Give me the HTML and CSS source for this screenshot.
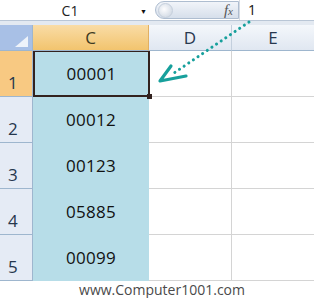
FILE: index.html
```html
<!DOCTYPE html>
<html lang="en">
<head>
    <meta charset="UTF-8">
    <title>Leading zeros</title>
    <link rel="stylesheet" href="styles.css">
</head>
<body>
    <div class="page">
        <div class="formula-bar">
            <div class="name-box">
                <span class="name">C1</span>
                <span class="drop">&#9660;</span>
            </div>
            <div class="fx-pill">
                <span class="knob"></span>
                <span class="fx">f<small>x</small></span>
            </div>
            <div class="formula">1</div>
        </div>
        <div class="strip"></div>

        <div class="sheet">
            <div class="corner"><span class="tri"></span></div>
            <div class="col-head active">C</div>
            <div class="col-head">D</div>
            <div class="col-head last">E</div>

            <div class="row-head active">1</div>
            <div class="cell val selected">00001</div>
            <div class="cell"></div>
            <div class="cell last"></div>

            <div class="row-head">2</div>
            <div class="cell val">00012</div>
            <div class="cell"></div>
            <div class="cell last"></div>

            <div class="row-head">3</div>
            <div class="cell val">00123</div>
            <div class="cell"></div>
            <div class="cell last"></div>

            <div class="row-head">4</div>
            <div class="cell val">05885</div>
            <div class="cell"></div>
            <div class="cell last"></div>

            <div class="row-head">5</div>
            <div class="cell val">00099</div>
            <div class="cell"></div>
            <div class="cell last"></div>
        </div>

        <div class="footer">www.Computer1001.com</div>

        <!-- callout arrow from formula bar to the cell -->
        <svg class="arrow" viewBox="0 0 314 298" xmlns="http://www.w3.org/2000/svg">
            <path d="M249 22 L174 73" stroke="#17a09c" stroke-width="3" stroke-dasharray="0.1 5.5" stroke-linecap="round" fill="none"/>
            <path d="M171 66 L160 81 L186 76" stroke="#17a09c" stroke-width="3.2" stroke-linecap="round" stroke-linejoin="round" fill="none"/>
        </svg>
    </div>
</body>
</html>
```

FILE: styles.css
```css
body {
    margin: 0;
    background: #fff;
    font-family: 'Open Sans', 'Noto Sans', sans-serif;
}
.page {
    position: relative;
    width: 314px;
    height: 298px;
    overflow: hidden;
}
.formula-bar {
    display: flex;
    height: 20px;
    border-bottom: 1px solid #b9c6d6;
    background: #fff;
}
.name-box {
    width: 152px;
    display: flex;
    align-items: center;
    position: relative;
}
.name {
    flex: 1;
    text-align: center;
    font-size: 14px;
    color: #222;
}
.drop {
    font-size: 7px;
    color: #111;
    margin-right: 5px;
    margin-top: 2px;
}
.fx-pill {
    width: 84px;
    margin: 1px 0 0 3px;
    height: 18px;
    border: 1px solid #aebdd0;
    border-radius: 10px 0 0 10px;
    background: linear-gradient(#f1f4f9, #d6dfeb);
    display: flex;
    align-items: center;
    justify-content: space-between;
    box-sizing: border-box;
}
.knob {
    width: 13px;
    height: 13px;
    border-radius: 50%;
    margin-left: 2px;
    background: radial-gradient(circle at 40% 40%, #fdfdfe, #c7d1de);
    border: 1px solid #c5cfdc;
}
.fx {
    font-family: 'Liberation Serif', serif;
    font-style: italic;
    font-size: 15px;
    color: #555;
    margin-right: 5px;
}
.fx small {
    font-size: 11px;
}
.formula {
    padding-left: 8px;
    font-size: 14px;
    color: #111;
    line-height: 20px;
    border-left: 1px solid #d5dbe3;
}
.strip {
    height: 4px;
    background: #e3e9f1;
}
.sheet {
    display: grid;
    grid-template-columns: 33px 116px 83px 1fr;
    grid-template-rows: 26px repeat(5, 46px);
}
.corner {
    background: #a8c0e6;
    border-right: 1px solid #9eb6ce;
    border-bottom: 1px solid #9eb6ce;
    position: relative;
}
.tri {
    position: absolute;
    right: 4px;
    bottom: 3px;
    width: 0;
    height: 0;
    border-left: 13px solid transparent;
    border-bottom: 11px solid #eef3fa;
}
.col-head {
    background: linear-gradient(#f4f7fb, #e0e7f1);
    border-right: 1px solid #c3cfdd;
    border-bottom: 1px solid #9eb6ce;
    display: flex;
    align-items: center;
    justify-content: center;
    font-size: 17px;
    color: #27384f;
}
.col-head.active {
    background: linear-gradient(#f9dca6, #f2c46e);
    border-right-color: #e1b063;
    color: #3d3a22;
}
.col-head.last,
.cell.last {
    border-right: none;
}
.row-head {
    background: #e5ebf5;
    border-right: 1px solid #9eb6ce;
    border-bottom: 1px solid #9eb6ce;
    font-size: 17px;
    color: #26374d;
    display: flex;
    align-items: flex-end;
    padding: 0 0 2px 8px;
}
.row-head.active {
    background: #f8c982;
}
.cell {
    border-right: 1px solid #d4d4d4;
    border-bottom: 1px solid #d4d4d4;
}
.cell.val {
    background: #b7dde8;
    border: none;
    display: flex;
    align-items: center;
    justify-content: center;
    font-size: 17px;
    letter-spacing: 0.3px;
    color: #111;
    padding-bottom: 1px;
}
.cell.selected {
    border: 2px solid #32221f;
    border-top-width: 1px;
    margin-right: -1px;
    position: relative;
}
.cell.selected::after {
    content: '';
    position: absolute;
    right: -4px;
    bottom: -4px;
    width: 5px;
    height: 5px;
    background: #32221f;
}
.footer {
    text-align: center;
    font-size: 14px;
    line-height: 16px;
    color: #4a4a4a;
    padding: 1px 0 0 10px;
}
.arrow {
    position: absolute;
    left: 0;
    top: 0;
    width: 314px;
    height: 298px;
    pointer-events: none;
}
```
